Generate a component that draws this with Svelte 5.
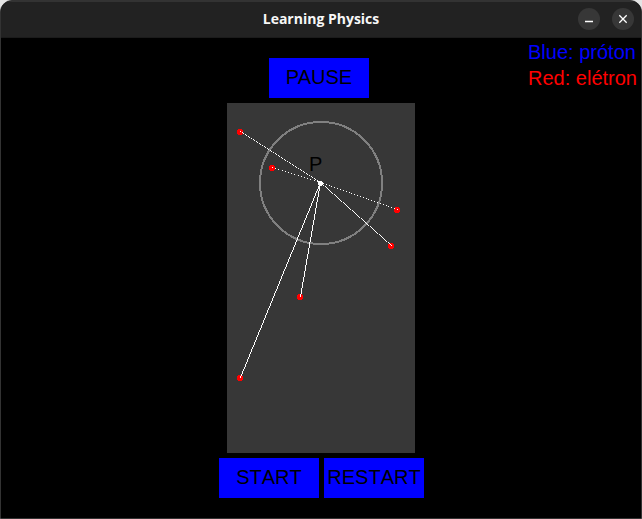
<script>
  const proton = { x: 93, y: 80 };
  const electrons = [
    { x: 13, y: 29 },
    { x: 45, y: 65 },
    { x: 170, y: 107 },
    { x: 164, y: 143 },
    { x: 73, y: 194 },
    { x: 13, y: 275 },
  ];

  // One pixel is plotted per row, so shallow lines come out dotted.
  function trace(from, to) {
    const rows = Math.abs(to.y - from.y);
    const step = Math.sign(to.y - from.y);
    let d = '';
    for (let i = 0; i <= rows; i++) {
      const x = Math.round(from.x + ((to.x - from.x) * i) / rows);
      d += `M${x} ${from.y + i * step}h1v-1h-1z`;
    }
    return d;
  }
</script>

<div class="window">
  <header>
    <h1>Learning Physics</h1>
    <div class="controls">
      <button class="round" aria-label="Minimize">
        <svg width="22" height="22" viewBox="0 0 22 22"><path d="M7 13.5h8" /></svg>
      </button>
      <button class="round" aria-label="Close">
        <svg width="22" height="22" viewBox="0 0 22 22"><path d="M7.3 7.3l7.4 7.4M14.7 7.3l-7.4 7.4" /></svg>
      </button>
    </div>
  </header>

  <main>
    <section class="lab">
      <button class="action pause">PAUSE</button>
      <svg class="field" width="188" height="350" viewBox="0 0 188 350" shape-rendering="crispEdges" role="img" aria-label="Electrons around a proton">
        <circle cx="94" cy="80" r="61" fill="none" stroke="#808080" stroke-width="2" />
        <text x="82" y="68">P</text>
        {#each electrons as e}
          <circle cx={e.x} cy={e.y} r="3" fill="#f00" />
        {/each}
        {#each electrons as e}
          <path d={trace(e, proton)} fill="#fff" />
        {/each}
        <path d="M92 78h3v1h1v3h-1v1h-3v-1h-1v-3h1z" fill="#fff" />
      </svg>
      <div class="row">
        <button class="action">START</button>
        <button class="action">RESTART</button>
      </div>
    </section>
    <aside>
      <p class="blue">Blue: próton</p>
      <p class="red">Red: elétron</p>
    </aside>
  </main>
</div>

<style>
  :global(body) {
    background: #e4e4e4;
  }
  .window {
    box-sizing: border-box;
    min-height: 100vh;
    display: flex;
    flex-direction: column;
    background: #000;
    border: 1px solid #333;
    border-radius: 12px 12px 0 0;
    overflow: hidden;
    font-family: "Liberation Sans", Arial, sans-serif;
  }
  header {
    box-sizing: border-box;
    height: 37px;
    display: grid;
    grid-template-columns: 1fr auto 1fr;
    align-items: center;
    padding: 0 7px 1px;
    background: #222;
    border-top: 1px solid #333;
    border-bottom: 1px solid #1b1b1b;
  }
  h1 {
    grid-column: 2;
    margin: 0;
    font: bold 14px/20px "Open Sans", "Noto Sans", sans-serif;
    color: #f7f7f7;
  }
  .controls {
    display: flex;
    justify-content: flex-end;
    gap: 12px;
  }
  .round {
    width: 22px;
    height: 22px;
    padding: 0;
    border: 0;
    border-radius: 50%;
    background: #373737;
  }
  .round svg {
    display: block;
    fill: none;
    stroke: #fff;
    stroke-width: 1.3;
  }
  main {
    display: grid;
    grid-template-columns: 1fr 205px 1fr;
    padding-left: 1px;
  }
  .lab {
    grid-column: 2;
    display: flex;
    flex-direction: column;
    gap: 5px;
    padding: 20px 0;
  }
  .action {
    width: 100px;
    height: 40px;
    padding: 0 0 2px;
    border: 0;
    background: #00f;
    color: #000;
    font: 20px/38px "Liberation Sans", Arial, sans-serif;
    font-kerning: none;
  }
  .pause {
    margin-left: 50px;
    font-kerning: normal;
  }
  .field {
    display: block;
    margin-left: 8px;
    background: #373737;
  }
  .field text {
    font-size: 20px;
  }
  .row {
    display: flex;
    gap: 5px;
  }
  aside {
    justify-self: end;
    padding: 1px 4px;
    font-size: 20px;
    line-height: 26px;
    white-space: nowrap;
  }
  p {
    margin: 0;
  }
  .blue {
    color: #00f;
  }
  .red {
    color: #f00;
  }
</style>
